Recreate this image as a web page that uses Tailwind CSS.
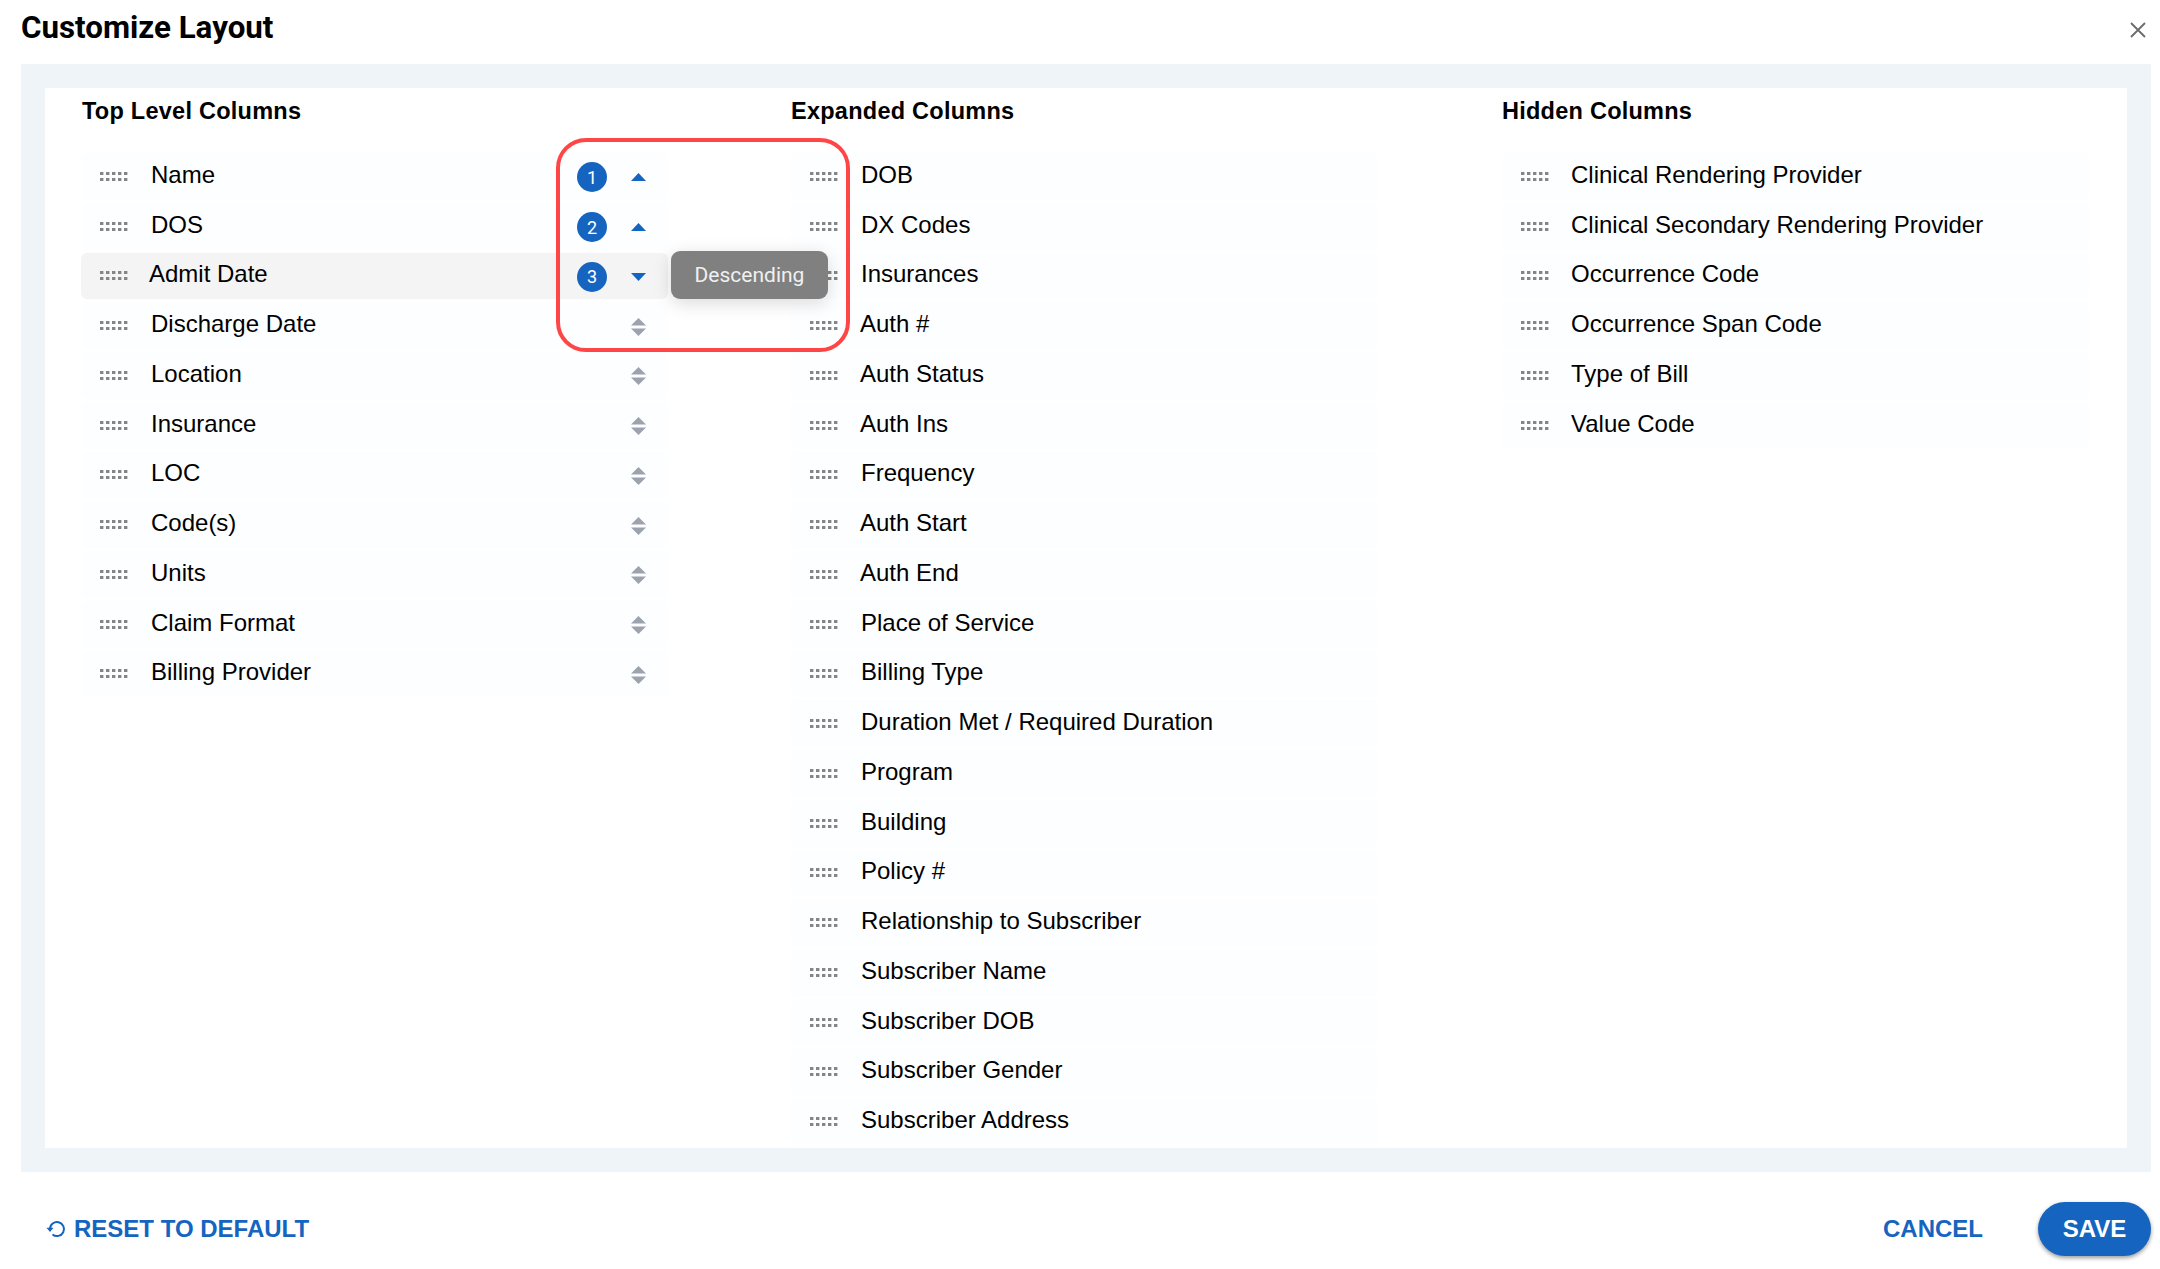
<!DOCTYPE html>
<html lang="en">
  <head>
    <meta charset="UTF-8" />
    <title>Customize Layout</title>
    <script src="https://cdn.jsdelivr.net/npm/@tailwindcss/browser@4"></script>
  </head>
  <body class="bg-white text-black font-['Liberation_Sans',Arial,sans-serif] h-[1269px] w-[2160px] overflow-hidden">
    <div class="relative h-full">
      <!-- title -->
      <header class="flex items-start justify-between h-[64px] pl-[21px] pr-[14px]">
        <h2 class="font-['Roboto',sans-serif] font-bold text-[31.3px] leading-[34px] mt-[11px]">Customize Layout</h2>
        <button class="mt-[22px] text-[#6b6b6b]">
          <svg width="16" height="16" viewBox="0 0 16 16" fill="none" stroke="currentColor" stroke-width="1.8"><path d="M1 1l14 14M15 1L1 15" /></svg>
        </button>
      </header>

      <!-- columns -->
      <section class="ml-[21px] w-[2130px] h-[1108px] p-[24px] bg-[#eff4f8]">
        <div class="h-[1060px] bg-white pl-[36px] grid grid-cols-[710px_711px_1fr]">
          <div>
            <h3 class="font-bold text-[23.5px] leading-[46px] tracking-[0.25px] ml-[1px]">Top Level Columns</h3>
            <div id="top-list" class="mt-[19px]"></div>
          </div>
          <div>
            <h3 class="font-bold text-[23.5px] leading-[46px] tracking-[0.25px]">Expanded Columns</h3>
            <div id="expanded-list" class="mt-[19px]"></div>
          </div>
          <div>
            <h3 class="font-bold text-[23.5px] leading-[46px] tracking-[0.25px]">Hidden Columns</h3>
            <div id="hidden-list" class="mt-[19px]"></div>
          </div>
        </div>
      </section>

      <!-- footer -->
      <footer class="flex items-center justify-between ml-[21px] w-[2130px] h-[114px]">
        <button class="flex items-center gap-[8px] ml-[25px] text-[#1565c0] font-bold text-[24px]">
          <svg width="20" height="20" viewBox="0 0 20 20" fill="none" stroke="currentColor" stroke-width="2"><path d="M4 10a7 7 0 1 1 2.5 5.4" /><path d="M0.5 8.8h7L4 13z" fill="currentColor" stroke="none" /></svg>
          RESET TO DEFAULT
        </button>
        <div class="flex items-center gap-[55px]">
          <button class="text-[#1565c0] font-bold text-[24px]">CANCEL</button>
          <button class="w-[113px] h-[54px] rounded-full bg-[#1565c0] text-white font-bold text-[24px] shadow-[0_2px_4px_rgba(0,0,0,0.4)]">SAVE</button>
        </div>
      </footer>

      <!-- annotation + tooltip over the list -->
      <div class="absolute left-[556px] top-[138px] w-[294px] h-[214px] border-[4px] border-[#ff4646] rounded-[30px] z-20"></div>
      <div class="absolute left-[671px] top-[251px] w-[157px] h-[48px] pt-[1px] rounded-[9px] bg-[#808080] text-[#f0f0f0] font-['Roboto',sans-serif] text-[21px] flex items-center justify-center shadow-[0_4px_18px_rgba(0,0,0,0.15)] z-10">Descending</div>
    </div>

    <script>
      const topCols = ["Name", "DOS", "Admit Date", "Discharge Date", "Location", "Insurance", "LOC", "Code(s)", "Units", "Claim Format", "Billing Provider"];
      const expanded = ["DOB", "DX Codes", "Insurances", "Auth #", "Auth Status", "Auth Ins", "Frequency", "Auth Start", "Auth End", "Place of Service", "Billing Type", "Duration Met / Required Duration", "Program", "Building", "Policy #", "Relationship to Subscriber", "Subscriber Name", "Subscriber DOB", "Subscriber Gender", "Subscriber Address"];
      const hidden = ["Clinical Rendering Provider", "Clinical Secondary Rendering Provider", "Occurrence Code", "Occurrence Span Code", "Type of Bill", "Value Code"];

      let dots = "";
      for (let y = 0; y < 2; y++) {
        for (let x = 0; x < 5; x++) {
          dots += `<rect x="${x * 6}" y="${y * 6}" width="3.4" height="3" />`;
        }
      }

      const upArrow = `<svg width="15" height="8" viewBox="0 0 15 8" fill="#1565c0"><path d="M7.5 0L15 8H0z" /></svg>`;
      const downArrow = `<svg width="15" height="8" viewBox="0 0 15 8" fill="#1565c0"><path d="M0 0h15L7.5 8z" /></svg>`;
      const bothArrows = `<svg width="15" height="18" viewBox="0 0 15 18" fill="#9ca3af"><path d="M7.5 0L15 7.5H0z" /><path d="M0 10.5h15L7.5 18z" /></svg>`;

      function row(name, extra, active, gap) {
        const bg = active ? "bg-[#f4f4f4]" : "bg-[#fdfeff]";
        // first letters with no side bearing sit a bit further left in the source
        let nudge = "";
        if (name === "Admit Date") nudge = "-ml-[2px]";
        if (name.startsWith("Auth")) nudge = "-ml-[1px]";
        return `<div class="flex items-center w-[587px] h-[46.75px] mb-[3px] rounded-[6px] ${bg}">
          <svg class="shrink-0 ml-[19px] ${gap}" width="28" height="9" viewBox="0 0 28 9" fill="#858585">${dots}</svg>
          <span class="text-[24px] leading-none pb-[3px] ${nudge}">${name}</span>${extra || ""}
        </div>`;
      }

      function sortCell(i) {
        const badge = i < 3
          ? `<span class="w-[30px] h-[30px] rounded-full bg-[#1565c0] text-white text-[18px] flex items-center justify-center font-['Roboto',sans-serif]">${i + 1}</span>`
          : "";
        const arrow = i < 2 ? upArrow : i === 2 ? downArrow : bothArrows;
        return `<span class="ml-auto mr-[22px] pt-[2px] flex items-center justify-end gap-[24px]">${badge}${arrow}</span>`;
      }

      document.querySelector("#top-list").innerHTML = topCols.map((n, i) => row(n, sortCell(i), i === 2, "mr-[23px]")).join("");
      document.querySelector("#expanded-list").innerHTML = expanded.map((n) => row(n, "", false, "mr-[23px]")).join("");
      document.querySelector("#hidden-list").innerHTML = hidden.map((n) => row(n, "", false, "mr-[22px]")).join("");
    </script>
  </body>
</html>
